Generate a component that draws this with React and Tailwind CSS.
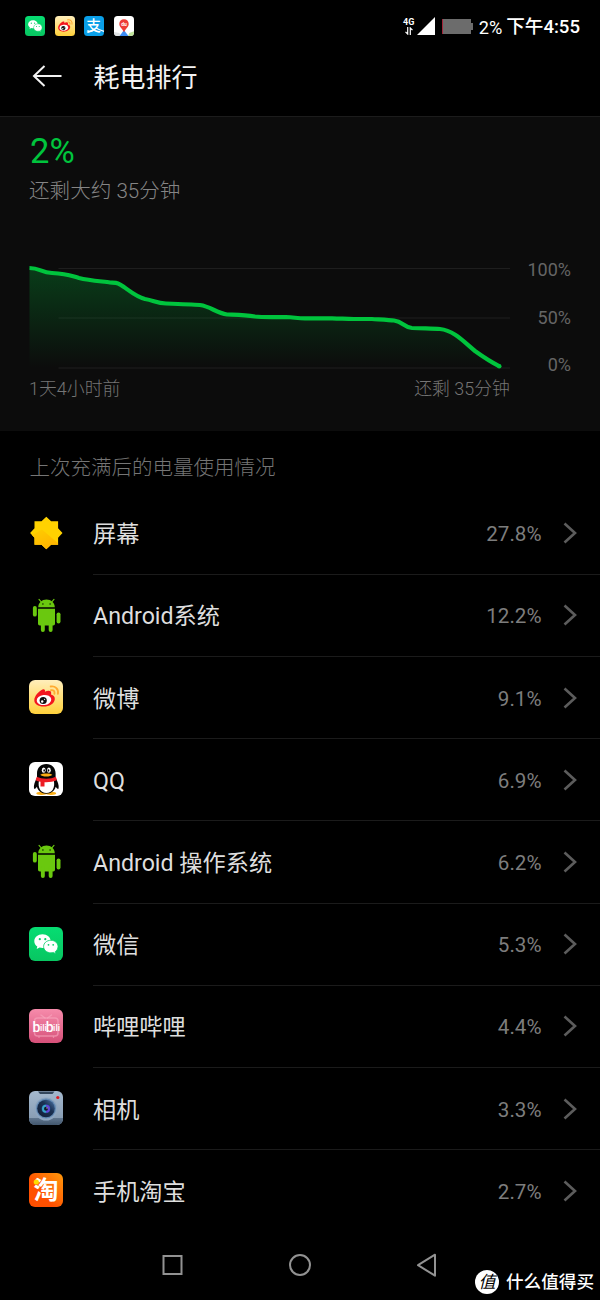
import React from 'react';

const CJK = '"Noto Sans CJK SC", sans-serif';

function WechatIcon({ className }) {
  return (
    <svg viewBox="0 0 34 34" className={className}>
      <defs>
        <linearGradient id="wechat" x1="0" y1="0" x2="0" y2="1">
          <stop offset="0" stopColor="#06dd72" />
          <stop offset="1" stopColor="#08c661" />
        </linearGradient>
      </defs>
      <rect width="34" height="34" rx="6" fill="url(#wechat)" />
      <path d="M13.500 7.200c-4.600 0-8.200 3.100-8.200 7 0 2.200 1.100 4.100 3 5.400l-.6 2.500 2.900-1.500c.9.300 1.900.400 2.900.400 4.600 0 8.200-3 8.200-6.800s-3.600-7-8.200-7z" fill="#fff" />
      <circle cx="10.800" cy="12.200" r="1.100" fill="#07cf69" />
      <circle cx="16.300" cy="12.200" r="1.100" fill="#07cf69" />
      <path d="M21.800 13.300c-4 0-7.200 2.700-7.200 6.200s3.200 6.300 7.200 6.300c.9 0 1.700-.100 2.500-.400l2.600 1.300-.6-2.100c1.700-1.200 2.700-3 2.700-5.100 0-3.500-3.200-6.200-7.200-6.200z" fill="#fff" stroke="#07d16b" strokeWidth=".8" />
      <circle cx="19.500" cy="17.800" r=".9" fill="#07cf69" />
      <circle cx="24.200" cy="17.800" r=".9" fill="#07cf69" />
    </svg>
  );
}

function WeiboIcon({ className }) {
  return (
    <svg viewBox="0 0 34 34" className={className}>
      <defs>
        <linearGradient id="weibo" x1="0" y1="0" x2="0" y2="1">
          <stop offset="0" stopColor="#ffeebb" />
          <stop offset="1" stopColor="#ffd13b" />
        </linearGradient>
      </defs>
      <rect width="34" height="34" rx="6" fill="url(#weibo)" />
      <path d="M13.500 9.500c1.800-.8 3 .3 2.400 2.300 2.800-1.500 6.500-1.800 6.300 1.400 0 .6-.3 1.100-.2 1.400 2.700.7 4 2.200 3.800 4.600-.4 4.200-5.200 7.400-11.200 7.400C9 26.600 5.200 23.900 5.300 20c.1-3.900 4.700-9 8.200-10.500z" fill="#f3171f" />
      <ellipse cx="15" cy="20" rx="7.300" ry="5" fill="#fff" transform="rotate(-7 15 20)" />
      <circle cx="14.200" cy="20.500" r="3.600" fill="#111" />
      <circle cx="13.200" cy="21.500" r="1.200" fill="#fff" />
      <circle cx="15.600" cy="19.300" r=".6" fill="#fff" />
      <path d="M21.700 6.500c4.800-.7 8 2.700 7.200 7.300M22 10.200c2.600-.4 4 1.200 3.400 3.600" fill="none" stroke="#ffaa32" strokeWidth="1.900" strokeLinecap="round" />
    </svg>
  );
}

function AlipayIcon({ className }) {
  return (
    <svg viewBox="0 0 34 34" className={className}>
      <rect width="34" height="34" rx="6" fill="#0a9fe8" />
      <text x="16.500" y="26" textAnchor="middle" fontSize="25" fontWeight="500" fontFamily={CJK} fill="#fff">支</text>
      <path d="M6 24.500c2 2.500 7 2 12-2.500M20 20c4 2.500 8 4.300 14 6" stroke="#fff" strokeWidth="2.200" fill="none" />
    </svg>
  );
}

function MapIcon({ className }) {
  return (
    <svg viewBox="0 0 34 34" className={className}>
      <rect width="34" height="34" rx="6" fill="#fff" />
      <path d="M0 27l9 2 3 5H6c-4 0-6-2-6-6z" fill="#dfe3e4" />
      <path d="M34 26l-8 3-2 5h4c4 0 6-2 6-6z" fill="#bfe39a" />
      <path d="M17 24l-7.500 10h15z" fill="#3c8df5" />
      <path d="M17 5.500c-4.700 0-8 3.500-8 7.900 0 5 5 7.800 8 14.200 3-6.400 8-9.200 8-14.200 0-4.400-3.300-7.900-8-7.900z" fill="#ee3b36" />
      <text x="17" y="16.500" textAnchor="middle" fontSize="8.500" fontWeight="700" fontFamily="Roboto, sans-serif" fill="#fff">du</text>
    </svg>
  );
}

function ScreenIcon({ className }) {
  return (
    <svg viewBox="0 0 34 34" className={className}>
      <defs>
        <clipPath id="sun">
          <path d="M17.300 .8l4.800 4.400h7v7L33.500 17l-4.400 4.800v7h-7l-4.800 4.400-4.800-4.400h-7v-7L1.100 17l4.400-4.800v-7h7z" />
        </clipPath>
        <linearGradient id="sunShade" x1="0" y1="0" x2=".6" y2="1">
          <stop offset="0" stopColor="#ffcf00" />
          <stop offset="1" stopColor="#ffb300" />
        </linearGradient>
      </defs>
      <g clipPath="url(#sun)">
        <path d="M0 0h34v34H0z" fill="#ffd200" />
        <path d="M2 20l11-6.500L30 28v6H0z" fill="url(#sunShade)" />
      </g>
    </svg>
  );
}

function AndroidIcon({ className }) {
  return (
    <svg viewBox="0 0 34 34" className={className}>
      <g fill="#6ac80f">
        <path d="M9.200 9.300C9.400 4.700 13 1.600 17.500 1.600s8.100 3.100 8.300 7.700z" />
        <path d="M9 10.700h17v14.800c0 1.200-.7 1.900-1.800 1.900H10.800c-1.100 0-1.800-.7-1.800-1.900z" />
        <rect x="3.900" y="8" width="3.900" height="10.600" rx="1.900" />
        <rect x="27.600" y="14.400" width="3.900" height="11" rx="1.900" />
        <rect x="11.900" y="22" width="3.900" height="12" rx="1.900" />
        <rect x="19.700" y="22" width="3.900" height="12" rx="1.900" />
      </g>
      <path d="M12.400 4.200L10 1.300M22.600 4.200L25 1.300" stroke="#6ac80f" strokeWidth="1.100" strokeLinecap="round" />
      <circle cx="13.900" cy="6" r=".8" fill="#0a2000" />
      <circle cx="21.100" cy="6" r=".8" fill="#0a2000" />
    </svg>
  );
}

function QQIcon({ className }) {
  return (
    <svg viewBox="0 0 34 34" className={className}>
      <rect width="34" height="34" rx="6" fill="#fff" />
      <ellipse cx="12.500" cy="31.300" rx="5.200" ry="1.600" fill="#f9ad15" />
      <ellipse cx="22" cy="31.300" rx="5.200" ry="1.600" fill="#f9ad15" />
      <path d="M17.300 2c-5.700 0-9.300 4-9.300 9.500v4.200c-2 3.500-3.600 7.500-3 10.800.5 1 2-.2 2.900-1.800 1 4 4.700 7 9.400 7s8.400-3 9.400-7c.9 1.600 2.400 2.800 2.900 1.800.6-3.300-1-7.300-3-10.800v-4.200C26.600 6 23 2 17.300 2z" fill="#050505" />
      <path d="M10 18.500h14.800c1.500 7-1.500 12.500-7.400 12.500S8.500 25.500 10 18.500z" fill="#fff" />
      <ellipse cx="14.700" cy="8.200" rx="1.900" ry="2.600" fill="#fff" />
      <ellipse cx="19.900" cy="8.200" rx="1.900" ry="2.600" fill="#fff" />
      <ellipse cx="15.200" cy="8.400" rx=".8" ry="1.200" />
      <ellipse cx="19.500" cy="8.400" rx=".8" ry="1.200" />
      <path d="M11.300 12.700c2-1.500 10-1.500 12 0-1.500 2.400-10.500 2.400-12 0z" fill="#f9ad15" />
      <path d="M7.800 14.800c5 2.600 14 2.600 19 0l1.200 3.300c-3.400 1.700-8.500 2.500-12.500 2.200v4.200h-4v-4.700c-1.800-.4-3.600-.9-4.900-1.600z" fill="#ed1c24" />
    </svg>
  );
}

function BilibiliIcon({ className }) {
  return (
    <svg viewBox="0 0 34 34" className={className}>
      <defs>
        <linearGradient id="bili" x1="0" y1="0" x2="0" y2="1">
          <stop offset="0" stopColor="#f68bab" />
          <stop offset="1" stopColor="#d65079" />
        </linearGradient>
      </defs>
      <rect width="34" height="34" rx="6" fill="url(#bili)" />
      <g fill="none" stroke="#f8a9c0" strokeOpacity=".6" strokeWidth="1.500" strokeLinecap="round">
        <rect x="5.500" y="9" width="23.500" height="18" rx="3" />
        <path d="M12 6l4 3M22.500 6l-4 3M10 28v.3M24.500 28v.3" />
      </g>
      <g fontWeight="500" fontFamily="Roboto, sans-serif" fill="#fff">
        <text x="3.600" y="22.800" fontSize="14">b</text>
        <text x="11" y="22" fontSize="9">ili</text>
        <text x="16.700" y="22.800" fontSize="14">b</text>
        <text x="24.100" y="22" fontSize="9">ili</text>
      </g>
    </svg>
  );
}

function CameraIcon({ className }) {
  return (
    <svg viewBox="0 0 34 34" className={className}>
      <defs>
        <linearGradient id="camBody" x1="0" y1="0" x2="0" y2="1">
          <stop offset="0" stopColor="#a5b9ce" />
          <stop offset="1" stopColor="#8297ae" />
        </linearGradient>
        <linearGradient id="camBase" x1="0" y1="0" x2="0" y2="1">
          <stop offset="0" stopColor="#60768e" />
          <stop offset="1" stopColor="#42566d" />
        </linearGradient>
        <linearGradient id="camLens" x1="1" y1="0" x2="0" y2="1">
          <stop offset="0" stopColor="#4e79ac" />
          <stop offset=".4" stopColor="#1b3153" />
          <stop offset="1" stopColor="#101c33" />
        </linearGradient>
      </defs>
      <rect width="34" height="34" rx="6" fill="url(#camBody)" />
      <path d="M0 27h34v1a6 6 0 0 1-6 6H6a6 6 0 0 1-6-6z" fill="url(#camBase)" />
      <path d="M9 .5h16.500l-2 2.500h-12.500z" fill="#34475c" />
      <circle cx="17" cy="18" r="11.500" fill="#8da5bf" />
      <circle cx="17" cy="17.500" r="10" fill="#6289b3" />
      <circle cx="17" cy="17.500" r="8.800" fill="url(#camLens)" />
      <circle cx="17" cy="17.800" r="4.500" fill="#264c86" />
      <path d="M17 13.800a4 4 0 0 1 0 8z" fill="#6544d8" />
      <path d="M17 13.800a4 4 0 0 0 0 8z" fill="#36a3c8" />
      <circle cx="17" cy="17.800" r="2" fill="#10152c" />
      <circle cx="18" cy="16.900" r=".6" fill="#fff" />
      <circle cx="28.800" cy="6.500" r="1.600" fill="#dd1b22" />
    </svg>
  );
}

function TaobaoIcon({ className }) {
  return (
    <svg viewBox="0 0 34 34" className={className}>
      <defs>
        <linearGradient id="taobao" x1=".35" y1=".6" x2="1" y2="0">
          <stop offset="0" stopColor="#ff5000" />
          <stop offset="1" stopColor="#ff9a0c" />
        </linearGradient>
      </defs>
      <rect width="34" height="34" rx="6" fill="url(#taobao)" />
      <text x="17" y="26" textAnchor="middle" fontSize="25" fontWeight="700" fontFamily={CJK} fill="#fff">淘</text>
      <circle cx="7.300" cy="9" r="2.600" fill="#ffdd00" />
    </svg>
  );
}

const STATUS_ICONS = [WechatIcon, WeiboIcon, AlipayIcon, MapIcon];

const APPS = [
  { name: '屏幕', usage: '27.8%', Icon: ScreenIcon },
  { name: 'Android系统', usage: '12.2%', Icon: AndroidIcon },
  { name: '微博', usage: '9.1%', Icon: WeiboIcon },
  { name: 'QQ', usage: '6.9%', Icon: QQIcon },
  { name: 'Android 操作系统', usage: '6.2%', Icon: AndroidIcon },
  { name: '微信', usage: '5.3%', Icon: WechatIcon },
  { name: '哔哩哔哩', usage: '4.4%', Icon: BilibiliIcon },
  { name: '相机', usage: '3.3%', Icon: CameraIcon },
  { name: '手机淘宝', usage: '2.7%', Icon: TaobaoIcon },
];

function StatusBar() {
  return (
    <div className="flex h-[54px] items-center justify-between pl-[25px] pr-[20px]">
      <div className="flex gap-[9.500px] pb-[2px]">
        {STATUS_ICONS.map((Icon, i) => <Icon key={i} className="size-[20px] overflow-visible" />)}
      </div>
      <div className="flex items-center">
        <div className="flex w-[12px] flex-col items-center pb-[1px]">
          <span className="text-[9px] leading-[9px] font-bold">4G</span>
          <svg viewBox="0 0 8 8" className="h-[8px] w-[8px]" fill="none" stroke="#fff" strokeWidth="1.200">
            <path d="M2.700 0v7L.5 4.800M5.300 8V1l2.200 2.200" />
          </svg>
        </div>
        <svg viewBox="0 0 18 18" className="ml-[2px] mb-[1px] size-[18px]">
          <path d="M18 0v18H0z" fill="#fff" />
        </svg>
        <div className="ml-[7px] mb-[1px] flex items-center">
          <div className="h-[15px] w-[1px] bg-[#a3253a]" />
          <div className="h-[15px] w-[28px] bg-[#6c6c6c]" />
          <div className="h-[7px] w-[2px] bg-[#6c6c6c]" />
        </div>
        <span className="ml-[6px] pt-[2px] text-[18.200px]">2%</span>
        <span className="ml-[4px] pt-[1px] text-[18.600px] font-medium">下午4:55</span>
      </div>
    </div>
  );
}

const LINE =
  'M29.500 268C40 268 41 272.500 52 273C68 273.800 70 275.500 79 278C90 280.700 104 281.500 110 282.500C117 283 118 282.500 124 287C131 292 137 297 145 299C154 300.500 157 303.500 166 303.500C180 304 193 304.500 200 305C211 306.500 216 313 227 314.500C240 315 245 315 255 316.500C263 317.500 275 317 286 317C295 317.500 298 318.300 305 318.300H332C342 318.500 345 319 354 319H372C380 319.500 390 320 394 320.500C403 321.500 404 327.500 412 328C426 328.500 434 328.500 440 329C454 330.500 464 342 475 351C484 357.500 490 361.500 499.500 366.300';

function UsageChart() {
  return (
    <svg viewBox="29 264 481 108" className="h-[108px] w-[481px]">
      <defs>
        <linearGradient id="fill" gradientUnits="userSpaceOnUse" x1="0" y1="268" x2="0" y2="368">
          <stop offset="0" stopColor="#00c13c" stopOpacity=".27" />
          <stop offset="1" stopColor="#00c13c" stopOpacity="0" />
        </linearGradient>
      </defs>
      <path d="M58.500 268.500H510M58.500 318H510M58.500 368H510" stroke="#1e1e1e" />
      <path d={`${LINE}V368H29.500z`} fill="url(#fill)" />
      <path d={LINE} fill="none" stroke="#00c43d" strokeWidth="4.200" />
      <circle cx="499.300" cy="366.200" r="2.200" fill="#00c43d" />
    </svg>
  );
}

function BatteryPanel() {
  return (
    <div className="h-[315px] border-t border-[#1c1c1c] bg-[#0c0c0c] pt-[14px] pl-[29px] pr-[29px]">
      <div className="pl-[1px] text-[34.500px] leading-[40px] text-[#00c43d]">2%</div>
      <div className="mt-[9px] text-[20.600px] leading-[22px] font-light text-[#858585]">还剩大约 35分钟</div>
      <div className="mt-[62px] flex justify-between">
        <UsageChart />
        <div className="flex h-[108px] flex-col justify-between pb-[2px] text-right text-[18px] leading-[11px] text-[#656565]">
          <span>100%</span>
          <span>50%</span>
          <span>0%</span>
        </div>
      </div>
      <div className="mt-[7px] flex w-[481px] justify-between text-[17.900px] leading-[20px] font-light text-[#757575]">
        <span>1天4小时前</span>
        <span>还剩 35分钟</span>
      </div>
    </div>
  );
}

function AppRow({ app, last }) {
  const { Icon, name, usage } = app;
  return (
    <div className="flex h-[82.200px] items-center pl-[29px]">
      <Icon className="mb-[2px] size-[34px] shrink-0 overflow-visible" />
      <div className={`ml-[30px] flex h-full flex-1 items-center pr-[23px] ${last ? '' : 'border-b border-[#1b1b1b]'}`}>
        <span className="flex-1 pt-[3px] text-[23.200px] text-[#dedede]">{name}</span>
        <span className="pt-[3px] text-[20.600px] text-[#7d7d7d]">{usage}</span>
        <svg viewBox="0 0 14 22" className="ml-[21.500px] h-[22px] w-[14px]">
          <path d="M1.500 1.500L12 11 1.500 20.500" fill="none" stroke="#5c5c5c" strokeWidth="2.600" />
        </svg>
      </div>
    </div>
  );
}

function NavBar() {
  return (
    <div className="flex flex-1 items-start justify-between pt-[21px] pl-[161px] pr-[162px]">
      <svg viewBox="0 0 24 24" className="size-[24px]" fill="none" stroke="#929292" strokeWidth="2">
        <rect x="2.500" y="3" width="18" height="18" />
      </svg>
      <svg viewBox="0 0 24 24" className="size-[24px]" fill="none" stroke="#929292" strokeWidth="2">
        <circle cx="12" cy="12" r="10" />
      </svg>
      <svg viewBox="0 0 24 24" className="size-[24px]" fill="none" stroke="#929292" strokeWidth="2" strokeLinejoin="round">
        <path d="M21 1.700v21L4 12.200z" />
      </svg>
    </div>
  );
}

export default function App() {
  return (
    <div className="relative flex h-[1300px] w-[600px] flex-col overflow-hidden bg-black font-[Roboto,'Noto_Sans_CJK_SC',sans-serif] text-white">
      <StatusBar />

      <div className="flex h-[62px] items-center pb-[18px] pl-[32px]">
        <svg viewBox="0 0 30 22" className="h-[22px] w-[30px]" fill="none" stroke="#f2f2f2" strokeWidth="2">
          <path d="M12.500 1L2 11l10.500 10M2 11h27.500" />
        </svg>
        <h1 className="ml-[31.500px] pt-[4px] text-[26px] leading-[36px] text-[#f2f2f2]">耗电排行</h1>
      </div>

      <BatteryPanel />

      <h2 className="flex h-[61.600px] items-center pt-[13px] pl-[29.500px] text-[20.500px] font-light text-[#757575]">上次充满后的电量使用情况</h2>

      <div>
        {APPS.map((app, i) => <AppRow key={app.name} app={app} last={i === APPS.length - 1} />)}
      </div>

      <NavBar />

      {/* Watermark */}
      <div className="absolute right-[6px] bottom-[6px] flex items-center gap-[7px]">
        <div className="flex size-[24px] items-center justify-center rounded-full bg-white text-[17px] leading-[24px] text-black italic">值</div>
        <span className="pt-[1px] text-[17.600px] leading-[24px] font-medium">什么值得买</span>
      </div>
    </div>
  );
}
